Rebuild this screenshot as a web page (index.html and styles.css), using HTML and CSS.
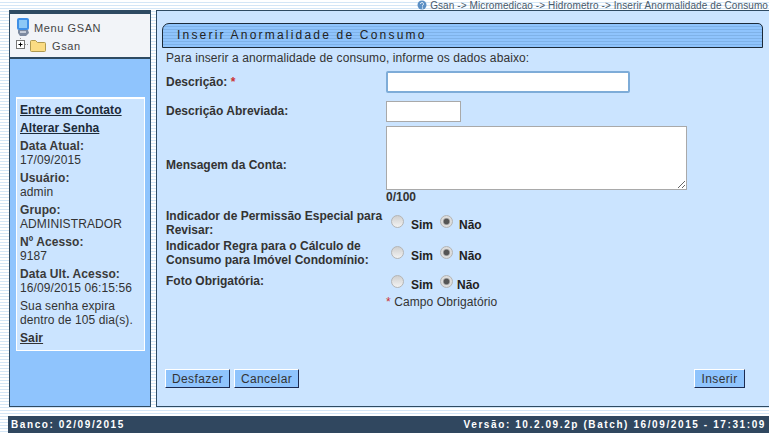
FILE: index.html
```html
<!DOCTYPE html>
<html lang="pt">
<head>
<meta charset="utf-8">
<title>Inserir Anormalidade de Consumo</title>
<link rel="stylesheet" href="styles.css">
</head>
<body>
<div class="crumbs"><svg class="help" width="10" height="10" viewBox="0 0 10 10"><circle cx="5" cy="5" r="4.500" fill="#5b8fc4"/><path d="M3.500 4a1.500 1.500 0 1 1 2 1.400V6.500" fill="none" stroke="#e6eff8"/><circle cx="5.500" cy="8" r=".7" fill="#e6eff8"/></svg>Gsan -&gt; Micromedicao -&gt; Hidrometro -&gt; Inserir Anormalidade de Consumo</div>
<div class="columns">
  <aside class="side">
    <div class="tree">
      <div class="tree-row">
        <svg class="pc" width="16" height="20" viewBox="0 0 16 20"><path d="M4 1h8a2 2 0 0 1 2 2v8a2 2 0 0 1-2 2H4a2 2 0 0 1-2-2V3a2 2 0 0 1 2-2z" fill="#3f8fe6"/><rect x="4" y="3" width="8" height="8" fill="#8cc8f6"/><path d="M3 13h10l1 3-3 3H5L3 16z" fill="#7d8aa0"/><rect x="5" y="14" width="6" height="2" fill="#c5ccd8"/></svg>
        <span>Menu GSAN</span>
      </div>
      <div class="tree-row sub">
        <svg width="34" height="14" viewBox="0 0 34 14"><path d="M5.500 -4v6" stroke="#999" stroke-dasharray="1 1"/><rect x="1.500" y="2.500" width="8" height="8" fill="#fff" stroke="#777"/><path d="M3.500 6.500h4M5.500 4.500v4" stroke="#000"/><path d="M10 6.500h4" stroke="#999" stroke-dasharray="1 1"/><path d="M15.500 3.500a1 1 0 0 1 1-1h4l2 2h7a1 1 0 0 1 1 1v7a1 1 0 0 1-1 1h-13a1 1 0 0 1-1-1z" fill="#fbdc83" stroke="#b09a50"/></svg>
        <span>Gsan</span>
      </div>
    </div>
    <div class="info">
      <a class="link" href="#">Entre em Contato</a>
      <a class="link" href="#">Alterar Senha</a>
      <div class="item"><b>Data Atual:</b><br>17/09/2015</div>
      <div class="item"><b>Usuário:</b><br>admin</div>
      <div class="item"><b>Grupo:</b><br>ADMINISTRADOR</div>
      <div class="item"><b>Nº Acesso:</b><br>9187</div>
      <div class="item"><b>Data Ult. Acesso:</b><br>16/09/2015 06:15:56</div>
      <div class="item">Sua senha expira<br>dentro de 105 dia(s).</div>
      <a class="link out" href="#">Sair</a>
    </div>
  </aside>
  <main class="main">
    <h1 class="title">Inserir Anormalidade de Consumo</h1>
    <p class="intro">Para inserir a anormalidade de consumo, informe os dados abaixo:</p>
    <div class="form">
      <div class="row r-desc"><label>Descrição: <i>*</i></label><input class="in-long" type="text"></div>
      <div class="row r-abrev"><label>Descrição Abreviada:</label><input class="in-short" type="text"></div>
      <div class="row r-msg"><label>Mensagem da Conta:</label><textarea></textarea></div>
      <div class="count">0/100</div>
      <div class="row r-radio"><label>Indicador de Permissão Especial para Revisar:</label><div class="radios"><input type="radio" name="a"><b>Sim</b><input type="radio" name="a" checked><b>Não</b></div></div>
      <div class="row r-radio2"><label>Indicador Regra para o Cálculo de Consumo para Imóvel Condomínio:</label><div class="radios"><input type="radio" name="b"><b>Sim</b><input type="radio" name="b" checked><b>Não</b></div></div>
      <div class="row r-foto"><label>Foto Obrigatória:</label><div class="radios tight"><input type="radio" name="c"><b>Sim</b><input type="radio" name="c" checked><b>Não</b></div></div>
      <div class="req"><i>*</i> Campo Obrigatório</div>
    </div>
    <div class="actions">
      <div class="left"><button>Desfazer</button><button>Cancelar</button></div>
      <button>Inserir</button>
    </div>
  </main>
</div>
<footer class="foot"><span>Banco: 02/09/2015</span><span>Versão: 10.2.09.2p (Batch) 16/09/2015 - 17:31:09</span></footer>
</body>
</html>
```
FILE: styles.css
```css
* { box-sizing: border-box; }
html, body { margin: 0; height: 433px; overflow: hidden; }
body {
  width: 769px;
  font-family: "Liberation Sans", Arial, sans-serif;
  font-size: 12px;
  color: #333;
  background: repeating-linear-gradient(#fff 0 2px, #d4e6f6 2px 3px);
}
.crumbs {
  height: 10px;
  line-height: 10px;
  font-size: 10px;
  letter-spacing: 0.1px;
  color: #4a5a6a;
  text-align: right;
  white-space: nowrap;
  padding-right: 1px;
}
.help { vertical-align: -1px; margin-right: 3px; }
.columns { display: flex; height: 397px; margin-left: 9px; gap: 5px; }
.side {
  width: 142px;
  background: #8fc4fd;
  border: 1px solid #2e4a62;
  border-top-width: 3px;
}
.tree {
  height: 46px;
  background: #f2f4f8;
  border: solid #2e4a62;
  border-width: 1px 0 2px;
  padding: 4px 0 0 5px;
  font-size: 11px;
  letter-spacing: 0.6px;
  color: #444;
}
.tree-row { display: flex; align-items: center; gap: 3px; height: 18px; }
.tree-row.sub { gap: 3px; }
.tree-row span { position: relative; top: 1px; }
.info {
  margin: 38px 5px 0 6px;
  background: #cbe4ff;
  border: 1px solid #fff;
  border-top-width: 2px;
  padding: 4px 0 0 3px;
  height: 254px;
  letter-spacing: 0.1px;
}
.link {
  display: block;
  font-weight: bold;
  color: #1c2a38;
  text-decoration: underline;
  line-height: 14px;
  margin-bottom: 4px;
}
.item { line-height: 14px; margin-bottom: 4px; }
.item b { color: #3a3a3a; }
.out { margin-top: 2px; color: #333; }
.main {
  flex: 1;
  margin-right: -1px;
  background: #cbe4ff;
  border: 1px solid #2e4a62;
  padding: 12px 0 0 5px;
  display: flex;
  flex-direction: column;
}
.title {
  margin: 0;
  height: 25px;
  width: 601px;
  font-size: 12px;
  font-weight: normal;
  letter-spacing: 2.2px;
  line-height: 23px;
  padding-left: 14px;
  color: #222;
  border: 1px solid #1c2a38;
  border-radius: 7px 5px 0 0;
  background: repeating-linear-gradient(#8fc4fd 0 2px, #7fb2e8 2px 3px);
}
.intro { margin: 3px 0 0 4px; line-height: 14px; letter-spacing: 0.1px; }
.form { margin: 2px 0 0 4px; }
.row { display: flex; }
.row label { width: 220px; flex: none; font-weight: bold; color: #333; line-height: 14px; }
i { color: #c33; font-style: normal; }
.r-desc { height: 29px; align-items: center; }
.in-long { width: 244px; height: 22px; border: 2px solid #7eacd8; border-radius: 2px; background: #fff; margin: 0; }
.r-abrev { height: 27px; margin-top: 2px; align-items: center; }
.r-abrev label { padding-bottom: 2px; }
.in-short { width: 75px; height: 21px; border: 1px solid #a9a9a9; background: #fff; margin: 0; }
.r-msg { align-items: center; height: 64px; margin-top: 1px; }
.r-msg label { padding-top: 13px; }
textarea { width: 301px; height: 64px; border: 1px solid #a9a9a9; background: #fff; margin: 0; }
.count { margin-left: 220px; font-weight: bold; line-height: 14px; }
.r-radio { height: 30px; margin-top: 5px; }
.r-radio2 { height: 35px; }
.r-foto { height: 21px; }
.radios { display: flex; align-items: center; height: 20px; margin-left: 5px; }
.r-radio .radios { margin-top: 4px; }
.r-radio2 .radios { margin-top: 5px; }
.r-foto .radios { margin-top: -1px; }
.radios input {
  appearance: none;
  -webkit-appearance: none;
  margin: 0;
  width: 13px;
  height: 13px;
  border-radius: 50%;
  border: 1px solid #b4b4b4;
  background: linear-gradient(#cfcfcf, #f2f2f2);
  position: relative;
  top: -2px;
}
.radios input:checked { background: radial-gradient(circle, #555 0 2.5px, #929292 3px, #dcdcdc 4px); }
.radios b { margin: 3px 7px 0 7px; color: #222; }
.radios b:last-child { margin: 3px 0 0 6px; }
.radios.tight b:last-child { margin-left: 4px; }
.req { margin-left: 220px; line-height: 14px; letter-spacing: 0.1px; }
.actions { display: flex; justify-content: space-between; margin: 60px 24px 0 3px; }
.left { display: flex; gap: 4px; }
button {
  height: 19px;
  width: 65px;
  padding: 0;
  font: 12px "Liberation Sans", Arial, sans-serif;
  letter-spacing: 0.4px;
  color: #333;
  background: #8fc4fd;
  border: 1px solid;
  border-color: #fff #1c2a50 #1c2a50 #fff;
}
.actions > button { width: 51px; }
.foot {
  margin: 9px 0 0 8px;
  height: 17px;
  background: #30475f;
  color: #fff;
  font-size: 10px;
  font-weight: bold;
  letter-spacing: 1.6px;
  line-height: 17px;
  display: flex;
  justify-content: space-between;
  padding: 0 3px 0 3px;
}
```
